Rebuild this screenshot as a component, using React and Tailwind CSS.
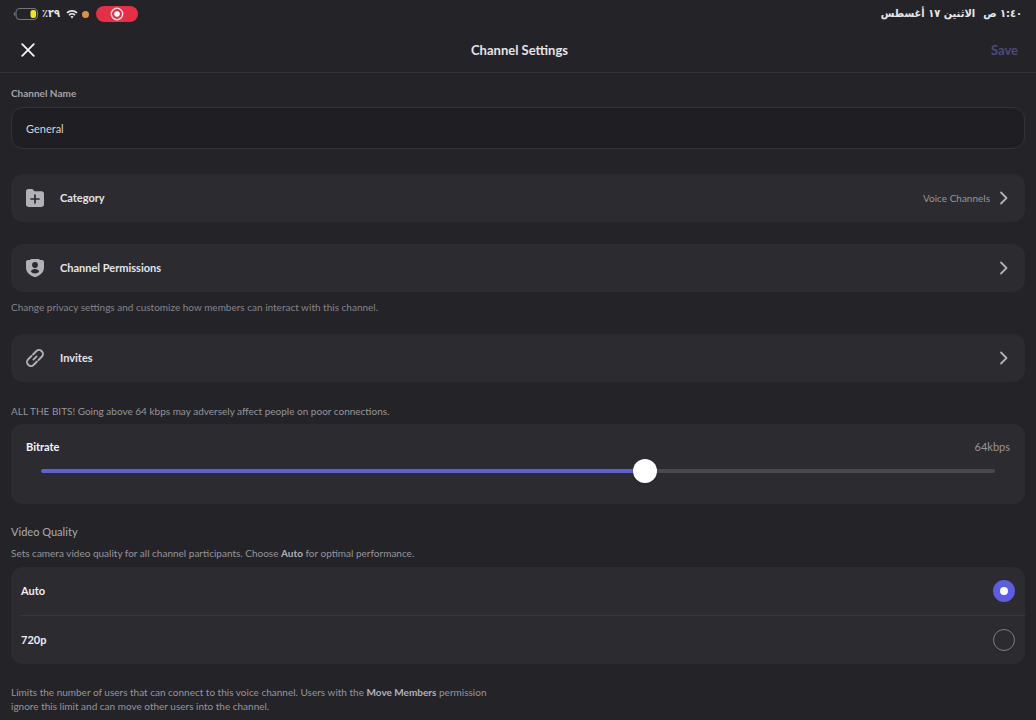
import React, { useState } from 'react';

const MIN_BITRATE = 8;
const MAX_BITRATE = 96;

function StatusBar() {
  return (
    <div className="flex items-center justify-between h-7 pl-[13px] pr-[14px] text-[#e6e6ea] font-['DejaVu_Sans_Condensed','DejaVu_Sans',sans-serif]">
      <div className="flex items-center">
        <svg width="26" height="14" viewBox="0 0 26 14" fill="none">
          <path d="M2 5.2C1.1 5.6.7 6.2.7 7s.4 1.4 1.3 1.8z" fill="#77767c" />
          <rect x="3" y="1.5" width="21.5" height="11" rx="4" stroke="#77767c" strokeWidth="1.1" />
          <rect x="17.5" y="3" width="5.6" height="8" rx="2.2" fill="#f2e51d" />
        </svg>
        <span dir="rtl" className="ml-[3px] text-[11px] font-semibold leading-4">٢٩٪</span>
        <svg className="ml-[6px]" width="12" height="10" viewBox="0 0 12 10" fill="none" stroke="currentColor" strokeWidth="1.7">
          <path d="M1 3.8C3.8 1.1 8.2 1.1 11 3.8" />
          <path d="M3 6.1c1.7-1.6 4.3-1.6 6 0" />
          <path d="M6 9.4 4.3 7.6c1-.9 2.4-.9 3.4 0z" fill="currentColor" stroke="none" />
        </svg>
        <span className="ml-1 size-[7px] rounded-full bg-[#e0904a]" />
        <span className="ml-[7px] flex h-4 w-[42px] items-center justify-center rounded-full bg-[#e62f45]">
          <svg width="14" height="14" viewBox="0 0 14 14" fill="none">
            <circle cx="7" cy="7" r="5.7" stroke="#fbe4e6" strokeWidth="1.4" />
            <circle cx="7" cy="7" r="2.8" fill="#fff" />
          </svg>
        </span>
      </div>
      <div dir="rtl" className="flex gap-2 text-[11px] font-semibold leading-4">
        <span>١:٤٠ ص</span>
        <span>الاثنين ١٧ أغسطس</span>
      </div>
    </div>
  );
}

function FolderPlusIcon() {
  return (
    <svg width="20" height="20" viewBox="0 0 20 20">
      <path d="M1 3.4C1 2.1 2 1.1 3.3 1.1h3.5c.7 0 1.3.3 1.7.9l.7.9c.2.3.5.4.8.4h6.7c1.3 0 2.3 1 2.3 2.3v11c0 1.3-1 2.3-2.3 2.3H3.3C2 18.9 1 17.9 1 16.6z" fill="#b2b1b8" />
      <path d="M10 7v8M6 11h8" stroke="#2b2a30" strokeWidth="1.7" strokeLinecap="round" />
    </svg>
  );
}

function ShieldUserIcon() {
  return (
    <svg width="20" height="20" viewBox="0 0 20 20">
      <path d="M5.6 1.4C6 1.1 6.5 1 7 1h6c.5 0 1 .1 1.4.4.5.4 1.1.6 1.7.6h.9c1.1 0 2 .9 2 2v5.5c0 4.7-3.9 7.9-8.1 9.4-.6.2-1.2.2-1.8 0C4.9 17.4 1 14.2 1 9.5V4c0-1.1.9-2 2-2h.9c.6 0 1.2-.2 1.7-.6z" fill="#b2b1b8" />
      <circle cx="10" cy="7" r="2.9" fill="#2b2a30" />
      <path d="M5.8 13.6c.5-1.8 2.2-2.7 4.2-2.7s3.7.9 4.2 2.7c-1 1.3-2.5 2-4.2 2s-3.2-.7-4.2-2z" fill="#2b2a30" />
    </svg>
  );
}

function LinkIcon() {
  return (
    <svg width="20" height="20" viewBox="0 0 20 20" fill="none" stroke="#b2b1b8" strokeWidth="1.8" strokeLinecap="round">
      <path d="M8.4 11.6l3.2-3.2" />
      <path d="M8 6.5l3.5-3.500a3.550 3.550 0 0 1 5 0l.5.5a3.550 3.550 0 0 1 0 5l-3.500 3.500" />
      <path d="M12 13.500l-3.500 3.500a3.550 3.550 0 0 1-5 0l-.5-.5a3.550 3.550 0 0 1 0-5l3.500-3.500" />
    </svg>
  );
}

function Chevron() {
  return (
    <svg width="10" height="16" viewBox="0 0 10 16" fill="none" stroke="#b2b1b8" strokeWidth="1.8" strokeLinecap="round" strokeLinejoin="round">
      <path d="M2 2.5 7.5 8 2 13.5" />
    </svg>
  );
}

function Row({ icon, label, value, className }) {
  return (
    <button type="button" className={`flex w-full items-center rounded-xl bg-[#2c2b30] py-[14px] pl-[14px] pr-[16px] ${className}`}>
      {icon}
      <span className="ml-[15px] flex-1 text-left text-[11px] font-bold leading-5 text-[#e4e3e8]">{label}</span>
      {value && <span className="mr-[9px] text-[10px] leading-5 text-[#96959c]">{value}</span>}
      <Chevron />
    </button>
  );
}

function QualityOption({ label, value, selected, onSelect }) {
  return (
    <label className="flex cursor-pointer items-center justify-between py-[14px] pr-[10px]">
      <span className="text-[11px] font-bold leading-5 text-[#eeedf2]">{label}</span>
      <input
        type="radio"
        name="quality"
        value={value}
        checked={selected}
        onChange={() => onSelect(value)}
        className="-my-px size-[22px] appearance-none rounded-full border border-[#7d7c83] checked:border-[7px] checked:border-[#5c5de0] checked:bg-white"
      />
    </label>
  );
}

export default function App() {
  const [name, setName] = useState('General');
  const [bitrate, setBitrate] = useState(64);
  const [quality, setQuality] = useState('auto');

  const filled = ((bitrate - MIN_BITRATE) / (MAX_BITRATE - MIN_BITRATE)) * 100;

  return (
    <div className="min-h-screen bg-[#242328] font-['Lato','Noto_Sans',sans-serif]">
      <StatusBar />

      <header className="grid h-[45px] grid-cols-[1fr_auto_1fr] items-center border-b border-[#323137] pl-[21px] pr-[18px]">
        <button type="button" aria-label="Close" className="justify-self-start">
          <svg width="14" height="14" viewBox="0 0 14 14" stroke="#f4f4f6" strokeWidth="1.8" strokeLinecap="round">
            <path d="M1.2 1.2l11.6 11.6M12.8 1.2 1.2 12.8" />
          </svg>
        </button>
        <h1 className="text-[13px] font-bold leading-4 text-[#e4e3e8]">Channel Settings</h1>
        <button type="button" className="justify-self-end text-[13px] font-bold leading-4 text-[#4c4b7c]">Save</button>
      </header>

      <main className="px-[11px] pb-2 pt-[13px]">
        <label htmlFor="channel-name" className="block text-[10px] font-bold leading-[14px] text-[#a3a2a9]">Channel Name</label>
        <input
          id="channel-name"
          type="text"
          value={name}
          onChange={e => setName(e.target.value)}
          className="mt-[7px] block h-[42px] w-full rounded-xl border border-[#333238] bg-[#1f1e23] px-[14px] text-[11px] text-[#d3d2d8] outline-none"
        />

        <Row icon={<FolderPlusIcon />} label="Category" value="Voice Channels" className="mt-[25px]" />

        <Row icon={<ShieldUserIcon />} label="Channel Permissions" className="mt-[22px]" />
        <p className="mt-2 text-[10px] leading-[14px] text-[#85848b]">Change privacy settings and customize how members can interact with this channel.</p>

        <Row icon={<LinkIcon />} label="Invites" className="mt-5" />

        <p className="mt-[22px] text-[10px] leading-[14px] text-[#96959c]">ALL THE BITS! Going above 64 kbps may adversely affect people on poor connections.</p>
        <section className="mt-[6px] rounded-xl bg-[#2c2b30] px-[15px] pb-[31px] pt-[13px]">
          <div className="flex items-center justify-between leading-5">
            <label htmlFor="bitrate" className="text-[11px] font-bold text-[#f4f4f6]">Bitrate</label>
            <span className="text-[11px] text-[#96959c]">{bitrate}kbps</span>
          </div>
          <div className="mt-3 px-[15px]">
            <input
              id="bitrate"
              type="range"
              min={MIN_BITRATE}
              max={MAX_BITRATE}
              value={bitrate}
              onChange={e => setBitrate(Number(e.target.value))}
              style={{ background: `linear-gradient(to right, #5f5fd6 ${filled}%, #49484e ${filled}%)` }}
              className="block h-1 w-full appearance-none rounded-full outline-none [&::-webkit-slider-thumb]:size-6 [&::-webkit-slider-thumb]:appearance-none [&::-webkit-slider-thumb]:rounded-full [&::-webkit-slider-thumb]:bg-white [&::-webkit-slider-thumb]:shadow"
            />
          </div>
        </section>

        <h2 className="mt-5 text-[11px] font-medium leading-4 text-[#a3a2a9]">Video Quality</h2>
        <p className="mt-[6px] text-[10px] leading-[14px] text-[#96959c]">
          Sets camera video quality for all channel participants. Choose <b className="font-bold text-[#b2b1b8]">Auto</b> for optimal performance.
        </p>
        <div className="mt-[7px] divide-y divide-[#39383e] rounded-xl bg-[#2c2b30] pl-[10px]">
          <QualityOption label="Auto" value="auto" selected={quality === 'auto'} onSelect={setQuality} />
          <QualityOption label="720p" value="720p" selected={quality === '720p'} onSelect={setQuality} />
        </div>

        <p className="mt-[21px] max-w-[490px] text-[10px] leading-[14px] text-[#96959c]">
          Limits the number of users that can connect to this voice channel. Users with the <b className="font-bold text-[#b2b1b8]">Move Members</b> permission ignore this limit and can move other users into the channel.
        </p>
      </main>
    </div>
  );
}
